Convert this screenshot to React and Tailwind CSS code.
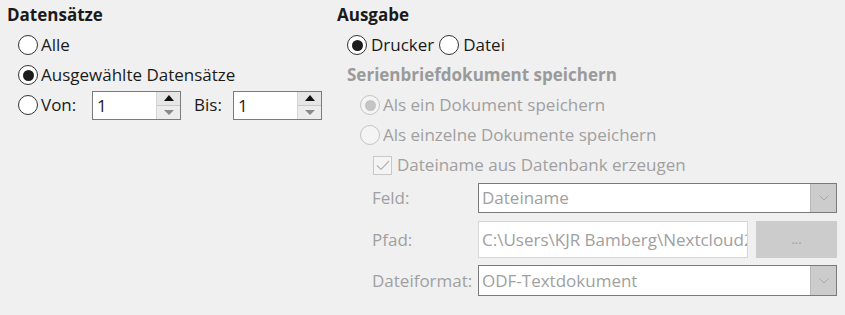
import React from 'react'

const font = { fontFamily: '"Open Sans", "Noto Sans", sans-serif' }

function Radio({ checked, disabled }) {
  return (
    <span className={`w-[20px] h-[20px] rounded-full border flex items-center justify-center shrink-0 ${disabled ? 'border-[#c4c4c4] bg-[#f4f4f4]' : 'border-[#333] bg-white'}`}>
      {checked && <span className={`w-[11px] h-[11px] rounded-full ${disabled ? 'bg-[#c4c4c4]' : 'bg-[#1c1c1c]'}`} />}
    </span>
  )
}

function Spin() {
  return (
    <div className="w-[89px] h-[29px] border border-[#7a7a7a] bg-white flex">
      <span className="flex-1 pl-[4px] leading-[27px]">1</span>
      <div className="w-[24px] flex flex-col border-l border-[#d4d4d4]">
        <div className="flex-1 bg-[#e6e6e6] border-b border-[#c8c8c8] flex items-center justify-center">
          <svg width="10" height="6" viewBox="0 0 10 6"><path d="M0 6 L5 0 L10 6 Z" fill="#111" /></svg>
        </div>
        <div className="flex-1 bg-[#ececec] flex items-center justify-center">
          <svg width="10" height="5" viewBox="0 0 10 5"><path d="M0 0 L10 0 L5 5 Z" fill="#8a8a8a" /></svg>
        </div>
      </div>
    </div>
  )
}

function Chevron() {
  return (
    <div className="w-[26px] h-full bg-[#cccccc] border-l border-[#b8b8b8] flex items-center justify-center">
      <svg width="10" height="6" viewBox="0 0 10 6"><path d="M0.5 0.5 L5 5 L9.5 0.5" fill="none" stroke="#a8a8a8" strokeWidth="1" /></svg>
    </div>
  )
}

export default function App() {
  return (
    <div className="w-[845px] h-[315px] bg-[#f0f0f0] flex text-[17px] text-[#1a1a1a]" style={font}>
      <div className="w-[337px] pl-[7px] flex flex-col">
        <div className="h-[30px] flex items-center font-bold">Datensätze</div>
        <div className="h-[30px] flex items-center pl-[11px] gap-[3px]">
          <Radio /><span>Alle</span>
        </div>
        <div className="h-[30px] flex items-center pl-[11px] gap-[3px]">
          <Radio checked /><span>Ausgewählte Datensätze</span>
        </div>
        <div className="h-[30px] flex items-center pl-[11px]">
          <Radio />
          <span className="ml-[3px] w-[51px]">Von:</span>
          <Spin />
          <span className="ml-[13px] w-[39px]">Bis:</span>
          <Spin />
        </div>
      </div>

      <div className="flex-1 flex flex-col pr-[8px]">
        <div className="h-[30px] flex items-center font-bold">Ausgabe</div>
        <div className="h-[30px] flex items-center pl-[10px]">
          <Radio checked /><span className="ml-[4px]">Drucker</span>
          <span className="ml-[5px]"><Radio /></span><span className="ml-[4px]">Datei</span>
        </div>
        <div className="h-[30px] flex items-center pl-[10px] font-bold text-[#9a9a9a]">Serienbriefdokument speichern</div>
        <div className="h-[30px] flex items-center pl-[23px] gap-[3px] text-[#a0a0a0]">
          <Radio checked disabled /><span>Als ein Dokument speichern</span>
        </div>
        <div className="h-[30px] flex items-center pl-[23px] gap-[3px] text-[#a0a0a0]">
          <Radio disabled /><span>Als einzelne Dokumente speichern</span>
        </div>
        <div className="h-[30px] flex items-center pl-[36px] gap-[5px] text-[#a0a0a0]">
          <span className="w-[19px] h-[19px] border border-[#c8c8c8] bg-[#f4f4f4] flex items-center justify-center">
            <svg width="14" height="11" viewBox="0 0 14 11"><path d="M1 5.5 L5 9.5 L13 1" fill="none" stroke="#b4b4b4" strokeWidth="1.2" /></svg>
          </span>
          <span>Dateiname aus Datenbank erzeugen</span>
        </div>

        <div className="mt-[3px] h-[30px] flex items-center pl-[35px] text-[#a0a0a0]">
          <span className="w-[106px]">Feld:</span>
          <div className="flex-1 h-full border border-[#7a7a7a] bg-white flex">
            <span className="flex-1 pl-[3px] leading-[28px]">Dateiname</span>
            <Chevron />
          </div>
        </div>

        <div className="mt-[8px] h-[37px] flex items-center pl-[35px] text-[#a0a0a0]">
          <span className="w-[106px]">Pfad:</span>
          <div className="w-[270px] h-full border border-[#d6d6d6] bg-white overflow-hidden whitespace-nowrap pl-[3px] leading-[35px]">C:\Users\KJR Bamberg\Nextcloud2</div>
          <div className="ml-[8px] flex-1 h-full bg-[#cccccc] flex items-center justify-center text-[13px]">...</div>
        </div>

        <div className="mt-[7px] h-[31px] flex items-center pl-[35px] text-[#a0a0a0]">
          <span className="w-[106px]">Dateiformat:</span>
          <div className="flex-1 h-full border border-[#7a7a7a] bg-white flex">
            <span className="flex-1 pl-[3px] leading-[29px]">ODF-Textdokument</span>
            <Chevron />
          </div>
        </div>
      </div>
    </div>
  )
}
